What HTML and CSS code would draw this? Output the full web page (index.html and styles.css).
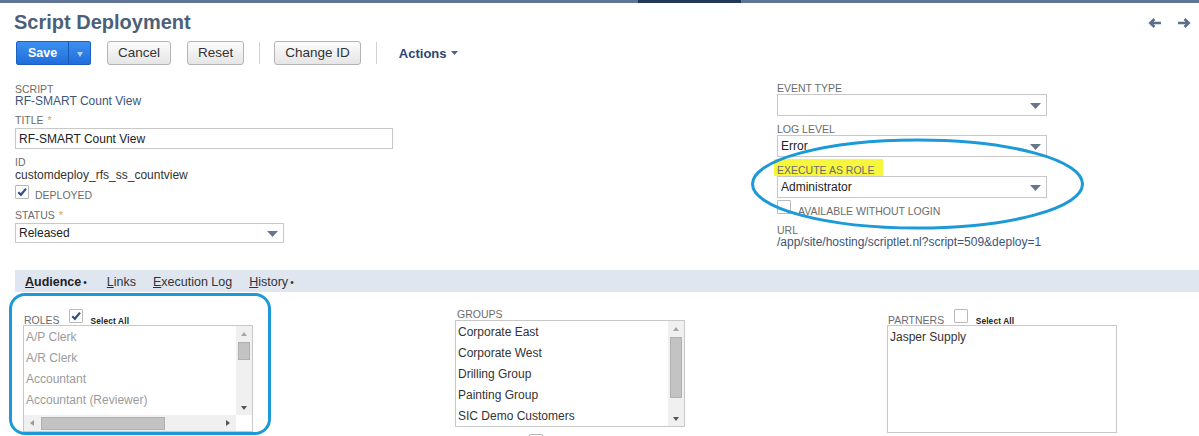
FILE: index.html
```html
<!DOCTYPE html>
<html>
<head>
<meta charset="utf-8">
<title>Script Deployment</title>
<link rel="stylesheet" href="styles.css">
</head>
<body>
<div class="topbar"><div class="topbar-seg"></div></div>

<header class="header">
  <h1 class="title">Script Deployment</h1>
  <div class="nav-arrows">
    <svg class="nav-arrow" width="14" height="10" viewBox="0 0 14 10"><path d="M13 5H2.5M6.5 1L2.3 5L6.5 9"/></svg>
    <svg class="nav-arrow" width="14" height="10" viewBox="0 0 14 10"><path d="M1 5H11.5M7.5 1L11.7 5L7.5 9"/></svg>
  </div>
</header>

<div class="toolbar">
  <div class="btn-save">
    <span class="btn-save-main">Save</span>
    <span class="btn-save-drop"><svg width="6" height="5" viewBox="0 0 6 5"><path d="M0 0H6L3 5Z"/></svg></span>
  </div>
  <div class="btn btn-cancel">Cancel</div>
  <div class="btn btn-reset">Reset</div>
  <span class="tb-sep"></span>
  <div class="btn btn-change">Change ID</div>
  <span class="tb-sep tb-sep-last"></span>
  <span class="actions">Actions<svg width="7" height="4" viewBox="0 0 7 4"><path d="M0 0H7L3.5 4Z"/></svg></span>
</div>

<div class="fields">
  <div class="col-left">
    <div class="lbl">Script</div>
    <div class="val link">RF-SMART Count View</div>

    <div class="lbl mt7">Title <span class="req">*</span></div>
    <div class="input mt2">RF-SMART Count View</div>

    <div class="lbl mt7">ID</div>
    <div class="val val-id">customdeploy_rfs_ss_countview</div>

    <div class="chk-row chk-row-left">
      <span class="chk"><svg width="12" height="12" viewBox="0 0 12 12"><path d="M2.3 6.2L4.9 8.8L10 2.6"/></svg></span>
      <span class="chk-text">Deployed</span>
    </div>

    <div class="lbl mt8">Status <span class="req">*</span></div>
    <div class="select select-sm mt2"><span>Released</span><svg class="sel-arrow" width="11" height="6" viewBox="0 0 11 6"><path d="M0 0H11L5.5 6Z"/></svg></div>
  </div>

  <div class="col-right">
    <div class="lbl">Event Type</div>
    <div class="select"><span></span><svg class="sel-arrow" width="11" height="6" viewBox="0 0 11 6"><path d="M0 0H11L5.5 6Z"/></svg></div>

    <div class="lbl mt7">Log Level</div>
    <div class="select"><span>Error</span><svg class="sel-arrow" width="11" height="6" viewBox="0 0 11 6"><path d="M0 0H11L5.5 6Z"/></svg></div>

    <div class="lbl mt7"><span class="hl">Execute as Role</span></div>
    <div class="select"><span>Administrator</span><svg class="sel-arrow" width="11" height="6" viewBox="0 0 11 6"><path d="M0 0H11L5.5 6Z"/></svg></div>

    <div class="chk-row chk-row-right">
      <span class="chk"></span>
      <span class="chk-text">Available without login</span>
    </div>

    <div class="lbl mt7">URL</div>
    <div class="val link">/app/site/hosting/scriptlet.nl?script=509&amp;deploy=1</div>
  </div>
</div>

<nav class="tabs">
  <span class="tab tab-active"><u>A</u>udience<span class="tab-dot">•</span></span>
  <span class="tab"><u>L</u>inks</span>
  <span class="tab"><u>E</u>xecution Log</span>
  <span class="tab"><u>H</u>istory<span class="tab-dot">•</span></span>
</nav>

<section class="audience">
  <div class="aud-col">
    <div class="aud-head">
      <span class="lbl aud-lbl">Roles</span>
      <span class="chk aud-chk"><svg width="12" height="12" viewBox="0 0 12 12"><path d="M2.3 6.2L4.9 8.8L10 2.6"/></svg></span>
      <span class="sel-all">Select All</span>
    </div>
    <div class="listbox lb-roles">
      <div class="lb-items">
        <div class="lb-item dim">A/P Clerk</div>
        <div class="lb-item dim">A/R Clerk</div>
        <div class="lb-item dim">Accountant</div>
        <div class="lb-item dim">Accountant (Reviewer)</div>
      </div>
      <div class="vscroll">
        <span class="sb-btn"><span class="tri-up"></span></span>
        <span class="thumb-v thumb-roles"></span>
        <span class="sb-fill"></span>
        <span class="sb-btn"><span class="tri-down"></span></span>
      </div>
      <div class="hscroll">
        <span class="sb-btn"><span class="tri-left"></span></span>
        <span class="thumb-h"></span>
        <span class="sb-fill"></span>
        <span class="sb-btn"><span class="tri-right"></span></span>
      </div>
      <div class="sb-corner"></div>
    </div>
  </div>

  <div class="aud-col">
    <div class="lbl aud-lbl-groups">Groups</div>
    <div class="listbox lb-groups">
      <div class="lb-items">
        <div class="lb-item">Corporate East</div>
        <div class="lb-item">Corporate West</div>
        <div class="lb-item">Drilling Group</div>
        <div class="lb-item">Painting Group</div>
        <div class="lb-item">SIC Demo Customers</div>
      </div>
      <div class="vscroll">
        <span class="sb-btn"><span class="tri-up"></span></span>
        <span class="thumb-v thumb-groups"></span>
        <span class="sb-fill"></span>
        <span class="sb-btn"><span class="tri-down"></span></span>
      </div>
    </div>
    <span class="chk chk-below"></span>
  </div>

  <div class="aud-col">
    <div class="aud-head">
      <span class="lbl aud-lbl">Partners</span>
      <span class="chk aud-chk aud-chk-p"></span>
      <span class="sel-all">Select All</span>
    </div>
    <div class="listbox lb-partners">
      <div class="lb-items">
        <div class="lb-item">Jasper Supply</div>
      </div>
    </div>
  </div>
</section>

<div class="anno-rect"></div>
<svg class="anno-ellipse" width="336" height="93" viewBox="0 0 336 93"><ellipse cx="167.5" cy="46" rx="165" ry="44"/></svg>
</body>
</html>
```

FILE: styles.css
```css
html, body {
  height: 100%;
  overflow: hidden;
}
body {
  margin: 0;
  position: relative;
  background: #ffffff;
  font-family: "Liberation Sans", Arial, Helvetica, sans-serif;
  color: #333333;
}

.topbar {
  height: 3px;
  background: #607493;
}
.topbar-seg {
  margin-left: 638px;
  width: 103px;
  height: 3px;
  background: #243855;
}

.header {
  display: flex;
  justify-content: space-between;
  align-items: center;
  padding: 7px 8px 0 14px;
}
.title {
  margin: 0;
  font-size: 20px;
  line-height: 24px;
  font-weight: bold;
  color: #4d5f79;
}
.nav-arrows {
  display: flex;
  gap: 15px;
  padding-top: 2px;
}
.nav-arrow path {
  fill: none;
  stroke: #5c6f8d;
  stroke-width: 2.6;
}

.toolbar {
  display: flex;
  align-items: center;
  margin-top: 7px;
  padding-left: 16px;
  height: 24px;
}
.btn-save {
  display: flex;
  height: 24px;
  box-sizing: border-box;
  border: 1px solid #1d60c0;
  border-radius: 2px;
  background: linear-gradient(#3c90f1, #1f6ddb);
}
.btn-save-main {
  width: 51px;
  text-align: center;
  color: #ffffff;
  font-weight: bold;
  font-size: 12.5px;
  line-height: 22px;
}
.btn-save-drop {
  width: 22px;
  box-sizing: border-box;
  border-left: 1px solid #1a58b3;
  display: flex;
  align-items: center;
  justify-content: center;
  padding-top: 2px;
}
.btn-save-drop path {
  fill: #b3d2f8;
}
.btn {
  height: 24px;
  box-sizing: border-box;
  border: 1px solid #b4b4b4;
  border-radius: 3px;
  background: linear-gradient(#fcfcfc, #e5e5e5);
  font-size: 13.5px;
  line-height: 22px;
  padding: 0 10px;
  color: #333333;
  margin-left: 16px;
}
.btn-reset {
  margin-left: 16px;
}
.btn-change {
  margin-left: 14px;
}
.tb-sep {
  width: 1px;
  height: 22px;
  background: #d2d2d2;
  margin-left: 15px;
}
.tb-sep-last {
  margin-left: 15px;
}
.actions {
  margin-left: 22px;
  font-size: 13px;
  font-weight: bold;
  color: #2a4676;
  display: flex;
  align-items: center;
  gap: 4px;
}
.actions path {
  fill: #4b6289;
}

/* main fields */
.fields {
  display: grid;
  grid-template-columns: 378px 270px;
  column-gap: 384px;
  padding-left: 15px;
  margin-top: 17px;
  align-items: start;
}
.col-left {
  padding-top: 1px;
}
.lbl {
  font-size: 10.5px;
  line-height: 12px;
  text-transform: uppercase;
  color: #6b6b6b;
  white-space: nowrap;
}
.val {
  font-size: 12px;
  line-height: 12px;
  color: #333333;
  white-space: nowrap;
}
.val-id {
  padding-top: 1px;
}
.link {
  color: #3b5579;
}
.mt2 { margin-top: 2px; }
.mt7 { margin-top: 7px; }
.mt8 { margin-top: 8px; }
.req {
  color: #eba027;
  font-size: 11px;
  margin-left: 1px;
}
.hl {
  background: #f7f63c;
  padding: 5px 9px 0 3px;
  margin-left: -3px;
}

.input {
  height: 21px;
  box-sizing: border-box;
  border: 1px solid #c8c8c8;
  font-size: 12px;
  line-height: 18px;
  padding: 1px 3px 0;
  color: #222222;
}
.select {
  height: 22px;
  box-sizing: border-box;
  border: 1px solid #c8c8c8;
  font-size: 12px;
  line-height: 18px;
  padding: 1px 5px 1px 3px;
  color: #222222;
  display: flex;
  justify-content: space-between;
  align-items: center;
}
.select-sm {
  height: 20px;
  width: 269px;
  padding: 0 5px 0 3px;
}
.sel-arrow {
  flex: none;
  margin-top: 1px;
}
.sel-arrow path {
  fill: #67778e;
}

.chk {
  display: inline-flex;
  align-items: center;
  justify-content: center;
  width: 14px;
  height: 14px;
  box-sizing: border-box;
  border: 1px solid #b9b9b9;
  border-radius: 1px;
  background: #ffffff;
  flex: none;
}
.chk path {
  fill: none;
  stroke: #2e5285;
  stroke-width: 2.2;
}
.chk-row {
  display: flex;
  align-items: flex-start;
}
.chk-row-left {
  margin-top: 4px;
}
.chk-row-right {
  margin-top: 2px;
}
.chk-text {
  font-size: 10.5px;
  line-height: 12px;
  text-transform: uppercase;
  color: #6b6b6b;
  white-space: nowrap;
}
.chk-row-left .chk-text {
  margin: 4px 0 0 6px;
}
.chk-row-right .chk-text {
  margin: 5px 0 0 7px;
}

/* tabs */
.tabs {
  margin: 22px 0 0 15px;
  height: 22px;
  box-sizing: border-box;
  background: #e0e6ef;
  display: flex;
  padding: 2px 0 0 1.5px;
  font-size: 12.5px;
  line-height: 20px;
  color: #333333;
}
.tab {
  padding: 0 8.5px;
  white-space: nowrap;
}
.tab-active {
  font-weight: bold;
  color: #222222;
}
.tab-dot {
  font-size: 10px;
  margin: 0 3px 0 2px;
  font-weight: normal;
}

/* audience */
.audience {
  display: grid;
  grid-template-columns: 432px 432px 230px;
  padding: 16px 0 0 23px;
  align-items: start;
}
.aud-col {
  display: flex;
  flex-direction: column;
  align-items: flex-start;
}
.aud-head {
  display: flex;
  align-items: flex-end;
  height: 17px;
}
.aud-lbl {
  line-height: 10px;
  margin-left: 1px;
}
.aud-chk {
  margin: 0 8px 2px 9px;
}
.aud-chk-p {
  margin-left: 9.5px;
}
.sel-all {
  font-size: 8.3px;
  line-height: 8px;
  font-weight: bold;
  color: #222222;
  letter-spacing: 0.15px;
  white-space: nowrap;
}
.aud-lbl-groups {
  margin-left: 2px;
}

.listbox {
  width: 230px;
  height: 107px;
  box-sizing: border-box;
  border: 1px solid #c8c8c8;
  background: #ffffff;
  overflow: hidden;
}
.lb-items {
  overflow: hidden;
  padding-top: 1px;
}
.lb-item {
  font-size: 12px;
  line-height: 21px;
  height: 21px;
  padding-left: 2px;
  color: #333333;
  white-space: nowrap;
}
.lb-item.dim {
  color: #9b9b9b;
}
.lb-roles {
  display: grid;
  grid-template-columns: 1fr 16px;
  grid-template-rows: 1fr 16px;
}
.lb-groups {
  display: grid;
  grid-template-columns: 1fr 16px;
}
.lb-partners {
  height: 108px;
}

.vscroll {
  background: #f0f0f0;
  display: flex;
  flex-direction: column;
  align-items: center;
}
.hscroll {
  background: #f0f0f0;
  display: flex;
  align-items: center;
}
.sb-corner {
  background: #ffffff;
}
.sb-btn {
  width: 16px;
  height: 15px;
  display: flex;
  align-items: center;
  justify-content: center;
  flex: none;
}
.hscroll .sb-btn {
  height: 16px;
}
.sb-fill {
  flex: 1;
}
.thumb-v {
  width: 12px;
  box-sizing: border-box;
  border: 1px solid #b0b0b0;
  background: #c3c3c3;
  flex: none;
}
.thumb-roles {
  height: 18px;
  margin-top: 1px;
}
.thumb-groups {
  height: 61px;
  margin-top: 1px;
}
.thumb-h {
  width: 124px;
  height: 13px;
  box-sizing: border-box;
  border: 1px solid #b0b0b0;
  background: #c3c3c3;
  margin-left: 1px;
  flex: none;
}
.tri-up {
  width: 0;
  height: 0;
  border-left: 3.5px solid transparent;
  border-right: 3.5px solid transparent;
  border-bottom: 4px solid #a6a6a6;
}
.tri-down {
  width: 0;
  height: 0;
  border-left: 3.5px solid transparent;
  border-right: 3.5px solid transparent;
  border-top: 4px solid #555555;
}
.tri-left {
  width: 0;
  height: 0;
  border-top: 3.5px solid transparent;
  border-bottom: 3.5px solid transparent;
  border-right: 4px solid #9a9a9a;
}
.tri-right {
  width: 0;
  height: 0;
  border-top: 3.5px solid transparent;
  border-bottom: 3.5px solid transparent;
  border-left: 4px solid #555555;
}
.chk-below {
  margin: 7px 0 0 74px;
}

/* annotations drawn over the screenshot */
.anno-rect {
  position: absolute;
  left: 9px;
  top: 293px;
  width: 262px;
  height: 142px;
  box-sizing: border-box;
  border: 3px solid #1b9ad7;
  border-radius: 16px;
}
.anno-ellipse {
  position: absolute;
  left: 750px;
  top: 138px;
}
.anno-ellipse ellipse {
  fill: none;
  stroke: #1b9ad7;
  stroke-width: 3;
}
```
